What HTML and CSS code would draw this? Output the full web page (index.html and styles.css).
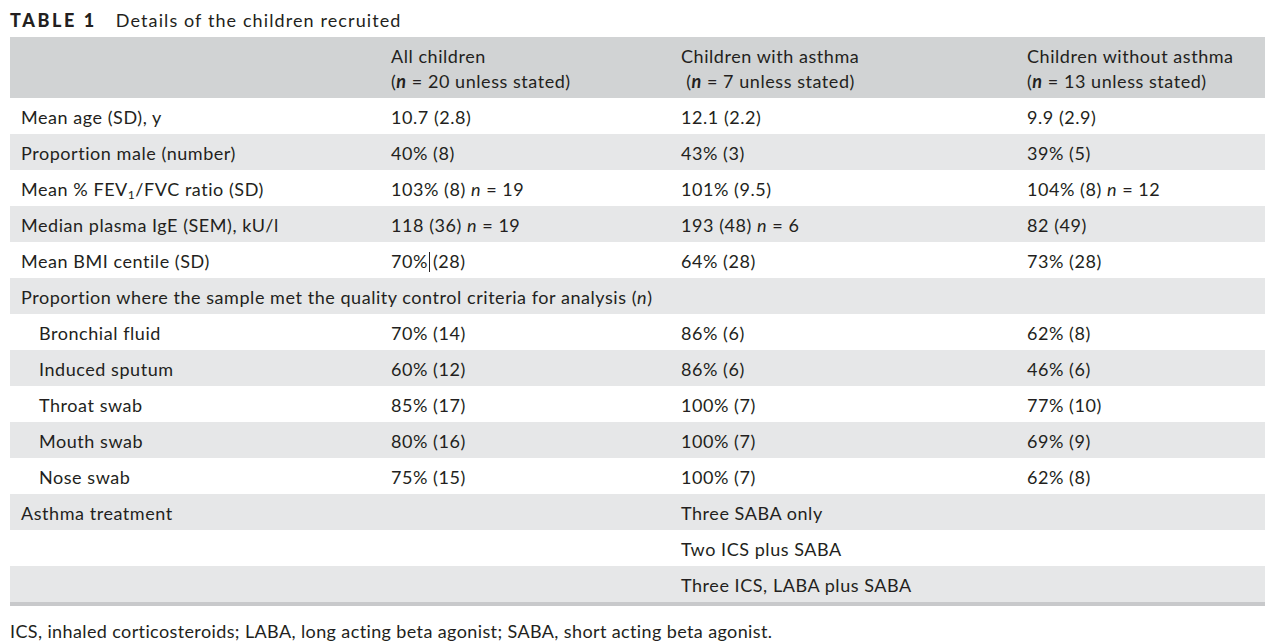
FILE: index.html
```html
<!DOCTYPE html>
<html>
<head>
<meta charset="utf-8">
<link rel="stylesheet" href="styles.css">
</head>
<body>
<div class="page">
  <div class="caption"><span class="label">TABLE 1</span><span class="ctext">Details of the children recruited</span></div>
  <table class="tbl">
    <colgroup>
      <col class="c1"><col class="c2"><col class="c3"><col class="c4">
    </colgroup>
    <thead>
      <tr>
        <th></th>
        <th>All children<br>(<b><i>n</i></b> = 20 unless stated)</th>
        <th>Children with asthma<br>&nbsp;(<b><i>n</i></b> = 7 unless stated)</th>
        <th>Children without asthma<br>(<b><i>n</i></b> = 13 unless stated)</th>
      </tr>
    </thead>
    <tbody>
      <tr><td>Mean age (SD), y</td><td>10.7 (2.8)</td><td>12.1 (2.2)</td><td>9.9 (2.9)</td></tr>
      <tr class="alt"><td>Proportion male (number)</td><td>40% (8)</td><td>43% (3)</td><td>39% (5)</td></tr>
      <tr><td>Mean % FEV<sub>1</sub>/FVC ratio (SD)</td><td>103% (8) <i>n</i> = 19</td><td>101% (9.5)</td><td>104% (8) <i>n</i> = 12</td></tr>
      <tr class="alt"><td>Median plasma IgE (SEM), kU/l</td><td>118 (36) <i>n</i> = 19</td><td>193 (48) <i>n</i> = 6</td><td>82 (49)</td></tr>
      <tr><td>Mean BMI centile (SD)</td><td>70%<span class="caret"></span>(28)</td><td>64% (28)</td><td>73% (28)</td></tr>
      <tr class="alt"><td colspan="4">Proportion where the sample met the quality control criteria for analysis (<i>n</i>)</td></tr>
      <tr><td class="ind">Bronchial fluid</td><td>70% (14)</td><td>86% (6)</td><td>62% (8)</td></tr>
      <tr class="alt"><td class="ind">Induced sputum</td><td>60% (12)</td><td>86% (6)</td><td>46% (6)</td></tr>
      <tr><td class="ind">Throat swab</td><td>85% (17)</td><td>100% (7)</td><td>77% (10)</td></tr>
      <tr class="alt"><td class="ind">Mouth swab</td><td>80% (16)</td><td>100% (7)</td><td>69% (9)</td></tr>
      <tr><td class="ind">Nose swab</td><td>75% (15)</td><td>100% (7)</td><td>62% (8)</td></tr>
      <tr class="alt"><td>Asthma treatment</td><td></td><td>Three SABA only</td><td></td></tr>
      <tr><td></td><td></td><td>Two ICS plus SABA</td><td></td></tr>
      <tr class="alt last"><td></td><td></td><td>Three ICS, LABA plus SABA</td><td></td></tr>
    </tbody>
  </table>
  <div class="note">ICS, inhaled corticosteroids; LABA, long acting beta agonist; SABA, short acting beta agonist.</div>
</div>
</body>
</html>
```

FILE: styles.css
```css
html, body {
  margin: 0;
  padding: 0;
  background: #ffffff;
}
body {
  font-family: Lato, "Open Sans", "Liberation Sans", sans-serif;
  color: #231f20;
  font-size: 18px;
  letter-spacing: 0.55px;
}
.page {
  padding: 8px 14px 0 10px;
}
.caption {
  height: 29px;
  line-height: 24px;
  font-size: 18px;
}
.label {
  font-weight: 900;
  letter-spacing: 2.6px;
  margin-right: 19px;
}
.ctext {
  letter-spacing: 1.1px;
}
.tbl {
  width: 1255px;
  border-collapse: collapse;
  table-layout: fixed;
  border-bottom: 4px solid #c8c9cb;
}
.c1 { width: 371px; }
.c2 { width: 290px; }
.c3 { width: 346px; }
.c4 { width: 248px; }
.tbl th {
  background: #d1d3d4;
  font-weight: 400;
  text-align: left;
  height: 58px;
  padding: 3px 0 0 10px;
  line-height: 25px;
  vertical-align: middle;
  white-space: nowrap;
}
.tbl td {
  height: 33px;
  padding: 3px 0 0 11px;
  line-height: 33px;
  white-space: nowrap;
  vertical-align: middle;
}
.tbl td + td {
  padding-left: 10px;
}
.tbl tr.alt td {
  background: #e6e7e8;
}
.tbl td.ind {
  padding-left: 29px;
}
.tbl sub {
  font-size: 12px;
  line-height: 0;
  vertical-align: -3px;
}
.caret {
  display: inline-block;
  width: 1px;
  height: 20px;
  background: #231f20;
  vertical-align: -4px;
  margin: 0 3px 0 1px;
}
.note {
  margin-top: 13px;
  line-height: 24px;
  letter-spacing: 0.38px;
}
```
